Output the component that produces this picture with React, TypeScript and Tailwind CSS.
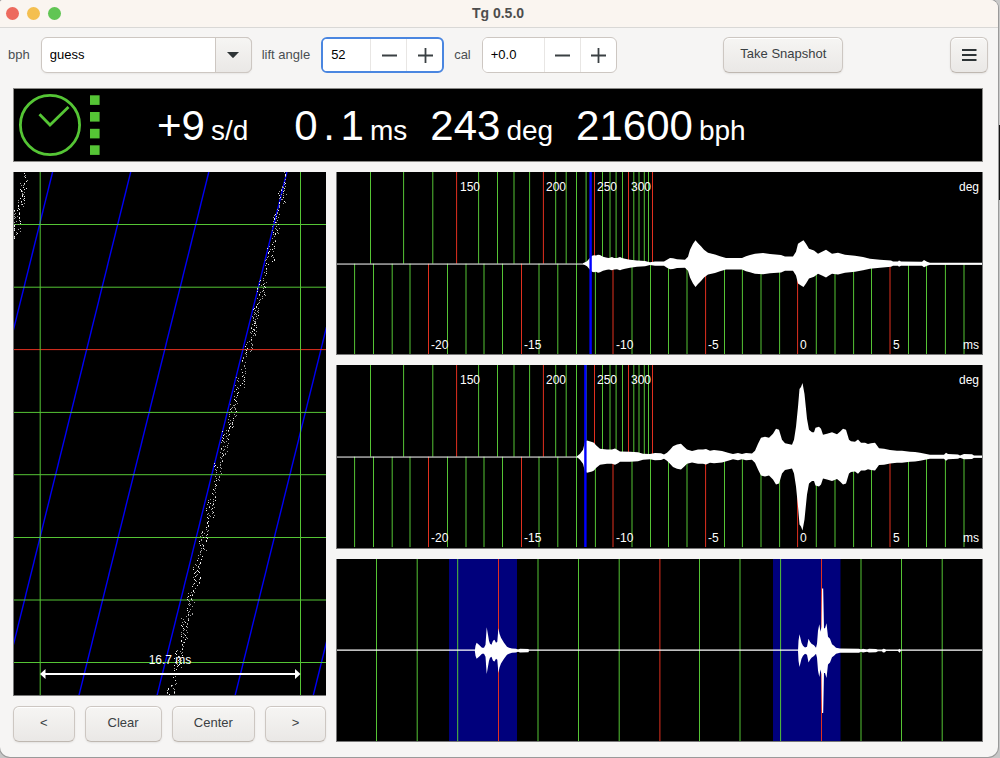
import { useState } from "react";
import type { ReactNode } from "react";

type Point = [number, number];

const GREEN = "#55c535";
const RED = "#e2301f";

/* ---------- shared controls ---------- */

const buttonLook =
  "h-9 rounded-md border border-[#cdc7c2] border-b-[#bfb8b1] bg-linear-to-b from-[#f6f5f3] to-[#eae8e6] pb-[2px] text-[13px] leading-4 text-[#3a4043] shadow-[inset_0_1px_0_#ffffff,0_1px_2px_rgba(0,0,0,0.08)]";

function StepGlyph({ plus }: { plus?: boolean }) {
  return (
    <svg viewBox="0 0 16 16" className="size-4" aria-hidden="true">
      <path d={plus ? "M1 8.5H16M8.5 1V16" : "M1 8.5H16"} stroke="#3a4043" strokeWidth="1.8" fill="none" />
    </svg>
  );
}

function SpinBox(props: {
  id: string;
  initial: number;
  step: number;
  format: (v: number) => string;
  frame: string;
  field: string;
}) {
  const [value, setValue] = useState(props.initial);
  return (
    <div className={"flex h-9 items-stretch overflow-hidden rounded-md bg-white " + props.frame}>
      <input
        id={props.id}
        type="text"
        inputMode="decimal"
        readOnly
        value={props.format(value)}
        className={"bg-white pl-2 text-[13px] leading-4 text-black outline-none " + props.field}
      />
      <button
        type="button"
        aria-label="Decrease"
        onClick={() => setValue(value - props.step)}
        className="flex w-9 items-center justify-center border-l border-[#e8e6e4]"
      >
        <StepGlyph />
      </button>
      <button
        type="button"
        aria-label="Increase"
        onClick={() => setValue(value + props.step)}
        className="flex w-9 items-center justify-center border-l border-[#e8e6e4]"
      >
        <StepGlyph plus />
      </button>
    </div>
  );
}

function Toolbar() {
  return (
    <div className="flex items-center pt-[9px] pr-[10px] pl-2 text-[13px] leading-4 text-[#4a4f52]">
      <label htmlFor="bph" className="mr-[11px]">bph</label>
      <div className="grid w-[211px] grid-cols-[1fr_37px]">
        <select
          id="bph"
          defaultValue="guess"
          className="col-span-2 col-start-1 row-start-1 h-9 appearance-none rounded-md border border-[#cdc7c2] bg-white pl-2 text-[13px] leading-4 text-black shadow-[0_1px_2px_rgba(0,0,0,0.06)] outline-none"
        >
          <option>guess</option>
          <option>12000</option>
          <option>14400</option>
          <option>18000</option>
          <option>21600</option>
          <option>28800</option>
        </select>
        <span className="pointer-events-none col-start-2 row-start-1 flex items-center justify-center rounded-r-md border border-[#cdc7c2] bg-linear-to-b from-[#f6f5f3] to-[#eae8e6]">
          <svg viewBox="0 0 12 6" className="h-[6px] w-3" aria-hidden="true">
            <path d="M0 0H12L6.7 5.6Q6 6.2 5.3 5.6Z" fill="#2e3436" />
          </svg>
        </span>
      </div>
      <label htmlFor="lift" className="mr-[11px] ml-[10px]">lift angle</label>
      <SpinBox
        id="lift"
        initial={52}
        step={1}
        format={(v) => String(v)}
        frame="border-2 border-[#4a86e0]"
        field="w-[47px]"
      />
      <label htmlFor="cal" className="mr-[11px] ml-[10px]">cal</label>
      <SpinBox
        id="cal"
        initial={0}
        step={0.1}
        format={(v) => (v < 0 ? "" : "+") + v.toFixed(1)}
        frame="border border-[#cdc7c2]"
        field="w-[61px]"
      />
      <div className="flex flex-1 justify-center">
        <button type="button" className={buttonLook + " px-4"}>
          Take Snapshot
        </button>
      </div>
      <button type="button" aria-label="Menu" className={buttonLook + " flex w-[38px] items-center justify-center"}>
        <svg viewBox="0 0 16 14" className="mt-[2px] h-[14px] w-4" aria-hidden="true">
          <path d="M1 2H15.500M1 7H15.500M1 12H15.500" stroke="#2e3436" strokeWidth="2" fill="none" />
        </svg>
      </button>
    </div>
  );
}

/* ---------- readout ---------- */

function Reading({ unit, children, pad }: { unit: string; children: ReactNode; pad?: boolean }) {
  return (
    <div className={"flex items-baseline gap-[6px] " + (pad ? "ml-[23px]" : "")}>
      <span className="text-[42px] leading-[48px]">{children}</span>
      <span className="text-[28px] leading-8">{unit}</span>
    </div>
  );
}

function Readout() {
  return (
    <div className="flex h-[74px] items-center border border-[#8b8a88] bg-black text-white">
      <svg viewBox="14 89 88 72" className="h-[72px] w-[88px] shrink-0" aria-label="Signal status">
        <circle cx="50" cy="125" r="29.600" fill="none" stroke={GREEN} strokeWidth="2.800" />
        <path d="M39.500 114.300L50 125L68.500 107" fill="none" stroke={GREEN} strokeWidth="2.800" />
        {[95.3, 112, 128.8, 145.3].map((y) => (
          <rect key={y} x="90" y={y} width="9.600" height="9.600" fill={GREEN} />
        ))}
      </svg>
      <div className="ml-[55px] flex items-baseline gap-[23px] pt-px whitespace-nowrap">
        <Reading unit="s/d">+9</Reading>
        <Reading unit="ms" pad>
          0<span className="inline-block w-[23px] text-center">.</span>1
        </Reading>
        <Reading unit="deg">243</Reading>
        <Reading unit="bph">21600</Reading>
      </div>
    </div>
  );
}

/* ---------- trace chart ---------- */

const TRACE_PATH: Point[] = [
  [172, 286], [200, 281], [222, 276], [250, 271], [285, 262], [320, 255], [350, 247], [380, 240],
  [412, 233], [440, 225], [474, 217], [505, 211], [537, 204], [565, 198], [600, 191], [630, 184],
  [650, 180], [680, 174], [695, 170],
];
const WRAPPED_PATH: Point[] = [
  [173, 26], [187, 24], [200, 21], [212, 18], [225, 16], [239, 15],
];

function sampleAt(path: Point[], y: number) {
  for (let i = 1; i < path.length; i++) {
    const [y0, x0] = path[i - 1];
    const [y1, x1] = path[i];
    if (y <= y1) return x0 + ((x1 - x0) * (y - y0)) / (y1 - y0);
  }
  return path[path.length - 1][1];
}

// Overlapping streaks: each starts left of the path and drifts to its right.
function scatter(path: Point[], seed: number) {
  let s = seed;
  const rand = () => {
    s = (s * 1103515245 + 12345) % 2147483648;
    return s / 2147483648;
  };
  const first = path[0][0];
  const last = path[path.length - 1][0];
  const faint: string[] = [];
  const bright: string[] = [];
  for (let start = first - 20; start < last; start += 26 + rand() * 10) {
    const length = 44 + rand() * 14;
    for (let t = 0; t < length; t += 1.35) {
      const y = start + t;
      const jitter = (rand() - 0.5) * 4;
      const skip = rand() < 0.12;
      const isFaint = rand() < 0.6;
      if (y < first || y > last || skip) continue;
      const x = Math.max(14, sampleAt(path, y) - 3.5 + (7 * t) / length + jitter);
      (isFaint ? faint : bright).push(`M${Math.round(x)} ${Math.round(y) + 0.5}h1`);
    }
  }
  return { faint: faint.join(""), bright: bright.join("") };
}

const TRACES = [scatter(TRACE_PATH, 7), scatter(WRAPPED_PATH, 91)];
const TRACE_ROWS = [224.5, 287.2, 349.6, 412.4, 474.7, 537.5, 600, 662.5];
const BEAT_LINES = [52.6, 130.7, 208.8, 286.9, 365, 443.1];

function TraceChart() {
  return (
    <svg className="h-0 min-h-[300px] w-full flex-1 border-b border-l border-[#777] bg-black" role="img" aria-label="Beat trace">
      <svg viewBox="14 172 312 523" preserveAspectRatio="none" width="100%" height="100%">
        {BEAT_LINES.map((x) => (
          <line key={x} x1={x} y1="172" x2={x - 130} y2="696" stroke="#0000f5" strokeWidth="1.400" />
        ))}
        {TRACE_ROWS.map((y) => (
          <line key={y} x1="13" x2="326" y1={y} y2={y} stroke={y === 349.6 ? RED : GREEN} />
        ))}
        <line x1="40.200" x2="40.200" y1="172" y2="696" stroke={GREEN} />
        <line x1="300.500" x2="300.500" y1="172" y2="696" stroke={GREEN} />
        {TRACES.map((t, i) => (
          <g key={i}>
            <path d={t.faint} stroke="#a0a0a0" />
            <path d={t.bright} stroke="#f0f0f0" />
          </g>
        ))}
        <path d="M43 674H298" stroke="#fff" strokeWidth="2" />
        <path d="M40 674L45.500 669V679ZM300.500 674L295 669V679Z" fill="#fff" />
      </svg>
      <svg y="100%" overflow="visible">
        <text x="50%" y="-31" textAnchor="middle" fill="#fff" className="text-[12px]">
          16.7 ms
        </text>
      </svg>
    </svg>
  );
}

/* ---------- waveform charts ---------- */

const MID = 92;

function envelope(points: Point[]) {
  const top = points.map(([x, h]) => `${x},${MID - h}`);
  const bottom = [...points].reverse().map(([x, h]) => `${x},${MID + h}`);
  return top.concat(bottom).join(" ");
}

const DEG_GREEN = [
  370.5, 403.6, 432.8, 478.6, 497.5, 514, 529.6, 555.7, 566.2, 576.5, 586.1, 602.5, 610, 616.1, 622.5, 633.8,
  639, 644.3, 648.5,
];
const DEG_RED = [456.6, 543.4, 594.5, 628.5, 652.5];
const MS_GREEN = [
  354.6, 373.5, 392.2, 410, 447.5, 466, 484, 502.5, 539, 557.8, 576.5, 595.4, 632, 650.5, 668.5, 687, 724.5,
  742.4, 761, 779.6, 816.3, 835, 853.6, 871.5, 908.5, 926.5, 945.4, 964,
];
const MS_RED = [428.5, 521.5, 613, 705.6, 797.6, 890];

const DEG_LABELS: [string, number][] = [["150", 460], ["200", 546], ["250", 597], ["300", 631]];
const MS_LABELS: [string, number][] = [["-20", 431], ["-15", 524], ["-10", 616], ["-5", 708], ["0", 800], ["5", 893]];

const TIC: Point[] = [
  [583, 0.3], [587, 2.5], [590, 6], [592, 8], [594, 8.5], [596, 8.2], [598, 9], [600, 8.6], [603, 7], [607, 6],
  [609, 5.8], [612, 6.7], [614, 5.8], [617, 5.6], [620, 6.6], [622, 5.8], [625, 5], [630, 4], [637, 3.2],
  [645, 2.6], [650, 1.3], [655, 2.1], [664, 2.2], [667, 4], [670, 5.6], [673, 5.4], [677, 4.4], [685, 4],
  [688, 7], [690, 14], [693, 20], [695.5, 23.5], [698, 20.5], [701, 17.5], [704, 14], [708, 11], [715, 9.3],
  [720, 7.5], [726, 5.8], [742, 5.8], [746, 7.5], [750, 8.6], [755, 10], [763, 10.6], [770, 9.6], [781, 8.8],
  [785, 7.2], [793, 7.2], [796, 12], [798, 20], [801, 22], [803.5, 23.5], [806, 20], [809, 15], [814, 13.2],
  [818, 10], [822, 12], [826, 14], [829, 12], [832, 10], [838, 11], [845, 9], [855, 8], [863, 6.6], [870, 5],
  [880, 4], [891, 3.2], [893, 2.2], [898, 2.2], [899, 3.2], [901, 2.2], [922, 2], [924, 3.6], [927, 2],
  [930, 1], [983, 1],
];
const TOC: Point[] = [
  [577, 0.3], [580, 3], [583, 7], [585, 15], [587, 16.2], [592, 14.8], [594, 14], [596, 11.5], [600, 8],
  [607, 7.2], [612, 7.2], [615, 8.2], [618, 6.5], [620, 5.2], [630, 5], [638, 4.5], [643, 3], [650, 2.6],
  [655, 3.6], [661, 3.4], [664, 2.2], [667, 4], [670, 7], [673, 10.5], [677, 12.2], [681, 13], [684, 10],
  [687, 7.2], [692, 5.8], [698, 7.2], [703, 7.2], [706, 7.8], [710, 6], [714, 6.6], [722, 5.8], [728, 4],
  [733, 2.6], [738, 3.6], [742, 2.6], [746, 3.6], [752, 3.2], [755, 6], [758, 13], [761, 19], [765, 20],
  [769, 19], [773, 23], [776, 28], [779, 27], [782, 17], [785, 13.5], [792, 12], [794, 17], [796, 30],
  [798, 50], [799.5, 68], [801, 70], [802.5, 74], [804.5, 63], [807, 38], [809, 27], [812, 24.5], [814, 24.5],
  [815.5, 29], [819, 30], [821, 28], [823, 22], [827, 23], [832, 24.5], [837, 22.5], [840, 25], [843, 28],
  [846, 27], [849, 17], [851, 15.5], [855, 15], [858, 17.2], [861, 14], [865, 14], [868, 12.6], [871, 13.5],
  [875, 14], [879, 8.4], [884, 8], [890, 6.8], [897, 6], [902, 6], [910, 5], [915, 4.8], [920, 4], [925, 3],
  [930, 2], [944, 2], [946, 4], [948, 2.6], [958, 2.2], [960, 1.2], [964, 2.6], [972, 2.4], [974, 1.2], [983, 1.2],
];

function pct(x: number) {
  return `${((x - 337) / 645) * 100}%`;
}

const chartBox = "h-full w-full border-x border-b border-[#777] bg-black";

function BeatChart({ label, wave, marker }: { label: string; wave: Point[]; marker: number }) {
  return (
    <svg className={chartBox} role="img" aria-label={label}>
      <svg viewBox="337 0 645 183" preserveAspectRatio="none" width="100%" height="100%">
        {DEG_GREEN.map((x) => <line key={x} x1={x} x2={x} y1="0" y2={MID} stroke={GREEN} />)}
        {DEG_RED.map((x) => <line key={x} x1={x} x2={x} y1="0" y2={MID} stroke={RED} />)}
        {MS_GREEN.map((x) => <line key={x} x1={x} x2={x} y1={MID} y2="183" stroke={GREEN} />)}
        {MS_RED.map((x) => <line key={x} x1={x} x2={x} y1={MID} y2="183" stroke={RED} />)}
        <line x1="337" x2="982" y1={MID + 0.4} y2={MID + 0.4} stroke="#fff" />
        <polygon points={envelope(wave)} fill="#fff" />
        <line x1={marker} x2={marker} y1="0" y2="183" stroke="#0000ff" strokeWidth="2.400" />
      </svg>
      {DEG_LABELS.map(([t, x]) => (
        <text key={t} x={pct(x)} y="19" fill="#fff" className="text-[12px]">{t}</text>
      ))}
      <text x={pct(979)} y="19" textAnchor="end" fill="#fff" className="text-[12px]">deg</text>
      <svg y="100%" overflow="visible">
        {MS_LABELS.map(([t, x]) => (
          <text key={t} x={pct(x)} y="-5" fill="#fff" className="text-[12px]">{t}</text>
        ))}
        <text x={pct(979)} y="-5" textAnchor="end" fill="#fff" className="text-[12px]">ms</text>
      </svg>
    </svg>
  );
}

const PERIOD_GREEN = [376.5, 417.2, 457.7, 538, 578.5, 619.2, 699.5, 740, 780.6, 861, 901.5, 942.2];
const PERIOD_RED = [498.5, 659.9, 821.5];
const PERIOD_TIC: Point[] = [
  [474.8, 0], [475.5, 5], [476.6, 8], [479, 6], [482, 3], [484, 3], [485.5, 6], [486.7, 23.5], [488, 16],
  [489, 10], [490, 7], [491.5, 6], [493, 10], [494.5, 11], [496, 8], [497.3, 9], [498.4, 22.5], [499.5, 17],
  [501, 13], [504, 8], [507, 4], [509, 3], [512, 2.2], [516, 1.8], [518, 1], [520, 1.8], [528.5, 1.6], [529, 0],
];
const PERIOD_TOC: Point[] = [
  [798, 0], [798.5, 10], [799.5, 16.5], [801.5, 8], [803, 5], [805, 3.2], [807, 4], [808.5, 12], [810, 9],
  [811.5, 7], [814, 5.4], [816, 3], [817, 7], [818, 20], [819.3, 26.5], [820.5, 19], [821.5, 24], [822, 62.5],
  [823.2, 62.5], [824, 22.5], [825, 22.5], [826.5, 27.5], [828, 14], [830, 12], [832, 6.5], [834, 5], [836, 3],
  [840, 2.2], [859, 2], [861, 1.2], [863, 1.8], [867, 1], [869, 1.8], [876, 1.6], [878, 0.5], [882, 0.5],
  [883, 1.8], [885, 1.6], [886, 0.4], [898, 0.4], [899.5, 2], [901, 0],
];

function PeriodChart() {
  return (
    <svg className={chartBox} role="img" aria-label="Full period">
      <svg viewBox="337 0 645 183" preserveAspectRatio="none" width="100%" height="100%">
        <rect x="449" y="0" width="68" height="183" fill="#00007c" />
        <rect x="773" y="0" width="67.500" height="183" fill="#00007c" />
        {PERIOD_GREEN.map((x) => <line key={x} x1={x} x2={x} y1="0" y2="183" stroke={GREEN} />)}
        {PERIOD_RED.map((x) => <line key={x} x1={x} x2={x} y1="0" y2="183" stroke={RED} />)}
        <line x1="337" x2="982" y1={MID - 0.5} y2={MID - 0.5} stroke="#fff" strokeWidth="1.200" />
        <polygon points={envelope(PERIOD_TIC)} fill="#fff" />
        <polygon points={envelope(PERIOD_TOC)} fill="#fff" />
      </svg>
    </svg>
  );
}

/* ---------- window ---------- */

export default function App() {
  return (
    <div className="flex min-h-screen bg-[linear-gradient(#c9c9c9_0_125px,#161616_125px_200px,#c6c6c6_200px)] pr-[2px] pb-px font-['Liberation_Sans',Arial,sans-serif]">
      <main className="flex flex-1 flex-col overflow-hidden rounded-tl-[3px] rounded-tr-lg rounded-b-[10px] bg-[#f6f5f4] shadow-[0_0_0_1px_#9a9a9a]">
        <header className="grid h-7 grid-cols-[1fr_auto_1fr] items-center border-b border-[#d9d8d6] bg-[#faf5f0] px-[6px]">
          <div className="flex gap-2">
            <button type="button" aria-label="Close" className="size-[13px] rounded-full bg-[#ed6a5e]" />
            <button type="button" aria-label="Minimize" className="size-[13px] rounded-full bg-[#f4bf4f]" />
            <button type="button" aria-label="Zoom" className="size-[13px] rounded-full bg-[#61c554]" />
          </div>
          <h1 className="pr-[2px] pb-[2px] text-[14px] leading-4 font-bold text-[#4d4d4d]">Tg 0.5.0</h1>
        </header>
        <Toolbar />
        <div className="flex flex-1 flex-col gap-[10px] px-[15px] pt-[15px] pb-[15px] pl-[13px]">
          <Readout />
          <div className="grid flex-1 grid-cols-[313fr_647fr] gap-[10px]">
            <section className="flex flex-col gap-[10px]">
              <TraceChart />
              <div className="grid grid-cols-[62fr_77fr_84fr_61fr] gap-[10px]">
                <button type="button" className={buttonLook}>&lt;</button>
                <button type="button" className={buttonLook}>Clear</button>
                <button type="button" className={buttonLook}>Center</button>
                <button type="button" className={buttonLook}>&gt;</button>
              </div>
            </section>
            <section className="grid grid-rows-3 gap-[10px]">
              <BeatChart label="Tic waveform" wave={TIC} marker={590.6} />
              <BeatChart label="Toc waveform" wave={TOC} marker={585.4} />
              <PeriodChart />
            </section>
          </div>
        </div>
      </main>
    </div>
  );
}
